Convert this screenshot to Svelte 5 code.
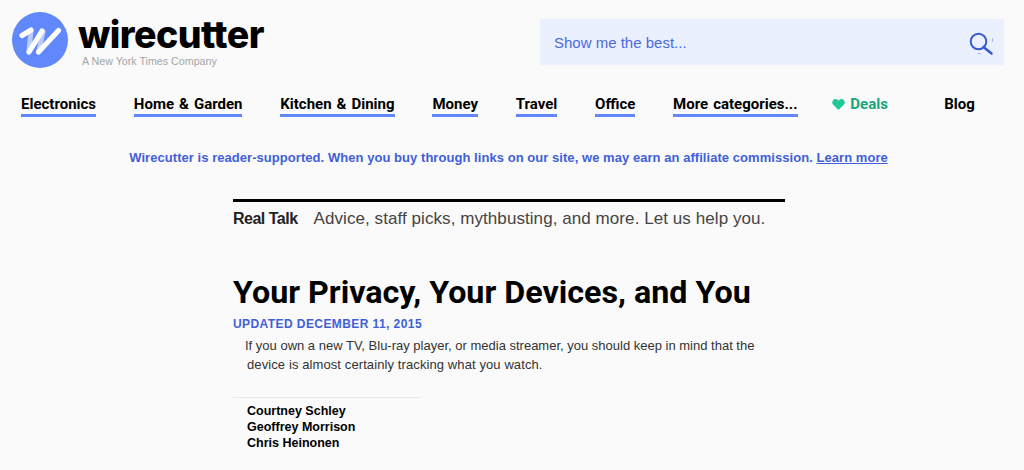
<script>
  const NAV = ['Electronics', 'Home & Garden', 'Kitchen & Dining', 'Money', 'Travel', 'Office', 'More categories...'];
  const AUTHORS = ['Courtney Schley', 'Geoffrey Morrison', 'Chris Heinonen'];
</script>

<div class="page">
  <header class="top">
    <a class="brand" href="#top">
      <svg class="mark" viewBox="0 0 56 56" aria-hidden="true">
        <circle cx="28" cy="28" r="28" fill="#6188fa" />
        <path d="M19 19 L17 38 M31 20 L27 38" fill="none" stroke="#b9cbfb" stroke-width="5" stroke-linecap="round" />
        <path d="M10 23.5 L19 18 M17 40 L30 19 M26.5 40 L46.5 18.5" fill="none" stroke="#fff" stroke-width="5.2" stroke-linecap="round" stroke-linejoin="round" />
      </svg>
      <span class="brand-text">
        <span class="wordmark">wirecutter</span>
        <span class="tagline">A New York Times Company</span>
      </span>
    </a>
    <div class="search">
      <span>Show me the best...</span>
      <svg class="search-icon" viewBox="0 0 26 24" aria-hidden="true">
        <circle cx="10.5" cy="9.5" r="7.8" fill="none" stroke="#3a5bd0" stroke-width="2" />
        <path d="M15.5 15 L23.5 21.5" fill="none" stroke="#3a5bd0" stroke-width="2.6" stroke-linecap="round" />
        <path d="M24.4 6 V10 M9.5 21.7 H13" fill="none" stroke="#9fb2ea" stroke-width="1" />
      </svg>
    </div>
  </header>

  <nav class="nav">
    {#each NAV as item}
      <a class="nav-link" href="#top">{item}</a>
    {/each}
    <a class="deals" href="#top">
      <svg viewBox="0 0 14 12" aria-hidden="true">
        <path d="M7 12 L1 6 C-1 3.5 1 0 3.7 0 C5.2 0 6.3 .8 7 2 C7.7 .8 8.8 0 10.3 0 C13 0 15 3.5 13 6 Z" fill="#1fc998" />
      </svg>
      Deals
    </a>
    <a class="blog" href="#top">Blog</a>
  </nav>

  <p class="notice">
    Wirecutter is reader-supported. When you buy through links on our site, we may earn an affiliate commission.
    <a href="#top">Learn more</a>
  </p>

  <main class="article">
    <div class="section-bar">
      <strong>Real Talk</strong>
      <span>Advice, staff picks, mythbusting, and more. Let us help you.</span>
    </div>
    <h1>Your Privacy, Your Devices, and You</h1>
    <div class="updated">UPDATED DECEMBER 11, 2015</div>
    <p class="dek">
      <span class="l1">If you own a new TV, Blu-ray player, or media streamer, you should keep in mind that the</span>
      <span class="l2">device is almost certainly tracking what you watch.</span>
    </p>
    <div class="authors">
      {#each AUTHORS as name}
        <div>{name}</div>
      {/each}
    </div>
  </main>
</div>

<style>
  :global(body) {
    background: #fafafa;
  }
  .page {
    height: 470px;
    overflow: hidden;
    font-family: 'Liberation Sans', Arial, sans-serif;
    color: #000;
  }
  a {
    color: inherit;
    text-decoration: none;
  }
  .top {
    display: flex;
    justify-content: space-between;
    padding: 12px 20px 0 12px;
  }
  .brand {
    display: flex;
    gap: 10px;
  }
  .mark {
    width: 56px;
    height: 56px;
  }
  .brand-text {
    display: flex;
    flex-direction: column;
    padding-top: 5px;
  }
  .wordmark {
    font-family: Inter, sans-serif;
    font-weight: 800;
    font-size: 37.5px;
    line-height: 35px;
    letter-spacing: -0.55px;
  }
  .tagline {
    margin: 2px 0 0 4px;
    font-size: 10.7px;
    line-height: 14px;
    color: #a5a5a5;
  }
  .search {
    width: 464px;
    height: 46px;
    margin-top: 7px;
    padding: 0 10px 0 14px;
    box-sizing: border-box;
    display: flex;
    align-items: center;
    justify-content: space-between;
    background: #ebf0ff;
    color: #4a6bdc;
    font-size: 15px;
  }
  .search-icon {
    width: 26px;
    height: 24px;
    margin-top: 3px;
  }
  .nav {
    display: flex;
    align-items: flex-start;
    margin-top: 27px;
    padding-left: 21px;
    gap: 37.8px;
    font-family: Roboto, sans-serif;
    font-size: 15px;
    font-weight: 700;
    line-height: 18px;
    word-spacing: 1.3px;
  }
  .nav-link {
    padding-bottom: 1px;
    border-bottom: 3px solid #6188fa;
  }
  .deals {
    display: flex;
    align-items: center;
    gap: 5px;
    margin-left: -3px;
    color: #13a67f;
  }
  .deals svg {
    width: 13px;
    height: 11px;
  }
  .blog {
    margin-left: 18.5px;
  }
  .notice {
    margin: 32px 0 0;
    padding-right: 7px;
    text-align: center;
    font-size: 13px;
    line-height: 18px;
    font-weight: 700;
    letter-spacing: 0.05px;
    color: #3f60d8;
  }
  .notice a {
    text-decoration: underline;
  }
  .article {
    width: 552px;
    margin: 32px 0 0 233px;
  }
  .section-bar {
    display: flex;
    gap: 16px;
    align-items: baseline;
    border-top: 3px solid #000;
    padding-top: 7px;
    font-size: 17px;
    line-height: 20px;
    letter-spacing: 0.07px;
    color: #444;
  }
  .section-bar strong {
    color: #222;
    font-size: 16px;
    letter-spacing: -0.5px;
  }
  h1 {
    margin: 43px 0 0;
    font-family: Roboto, sans-serif;
    font-size: 32.25px;
    line-height: 40px;
    font-weight: 700;
  }
  .updated {
    margin-top: 4px;
    font-size: 12px;
    line-height: 16px;
    font-weight: 700;
    letter-spacing: 0.42px;
    color: #3f60d8;
  }
  .dek {
    margin: 4px 0 0;
    font-size: 13px;
    line-height: 19px;
    color: #333;
  }
  .dek span {
    display: block;
  }
  .l1 {
    padding-left: 12px;
  }
  .l2 {
    padding-left: 14px;
    letter-spacing: 0.1px;
  }
  .authors {
    width: 188px;
    margin-top: 23px;
    padding: 5px 0 0 14px;
    box-sizing: border-box;
    border-top: 1px solid #e8e8e8;
    font-size: 12.5px;
    line-height: 16px;
    font-weight: 700;
  }
</style>
